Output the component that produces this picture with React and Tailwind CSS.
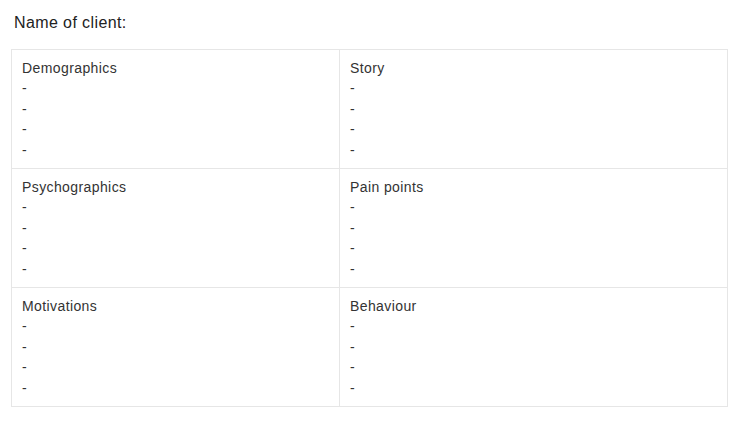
export default function App() {
  const rows = [
    ["Demographics", "Story"],
    ["Psychographics", "Pain points"],
    ["Motivations", "Behaviour"],
  ];
  const Cell = ({ title, left }) => (
    <div className={`px-[10px] pt-[8px] pb-[8px] text-[14px] leading-[20.4px] tracking-[0.4px] text-[#333] ${left ? "border-r border-[#e6e6e6]" : ""}`}>
      <div>{title}</div>
      <div>-</div>
      <div>-</div>
      <div>-</div>
      <div>-</div>
    </div>
  );
  return (
    <div className="w-[747px] h-[424px] bg-white font-['Liberation_Sans',Arial,sans-serif] text-[#222]">
      <div className="pl-[14px] pt-[12px] text-[16px] leading-[22px] tracking-[0.4px] text-[#222]">Name of client:</div>
      <div className="ml-[11px] mt-[15px] w-[717px] border border-[#e6e6e6]">
        {rows.map((r, i) => (
          <div key={i} className={`grid grid-cols-[328px_1fr] ${i > 0 ? "border-t border-[#e6e6e6]" : ""}`}>
            <Cell title={r[0]} left />
            <Cell title={r[1]} />
          </div>
        ))}
      </div>
    </div>
  );
}
